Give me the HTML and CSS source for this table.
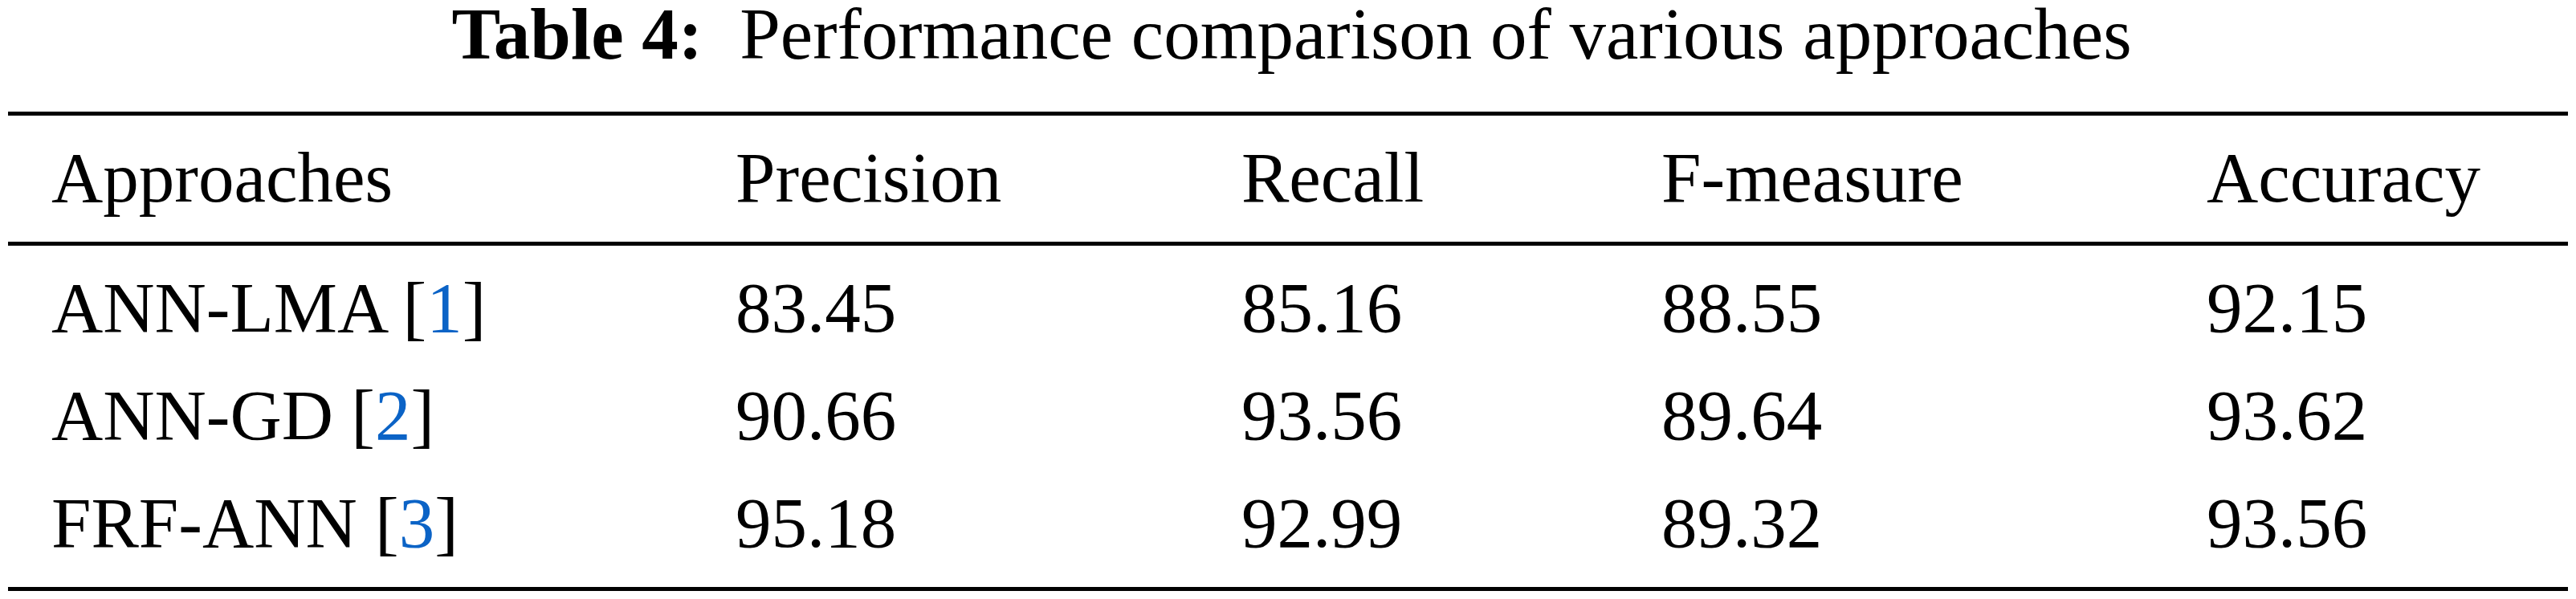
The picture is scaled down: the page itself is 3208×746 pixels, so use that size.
FILE: index.html
```html
<!DOCTYPE html>
<html lang="en">
<head>
    <meta charset="UTF-8">
    <meta name="viewport" content="width=device-width, initial-scale=1.0">
    <title>Table 4: Performance comparison of various approaches</title>
    <link rel="stylesheet" href="styles.css">
</head>
<body>
    <div class="caption"><b class="label">Table 4:</b>Performance comparison of various approaches</div>
    <table class="results">
        <colgroup>
            <col class="c-name">
            <col class="c-prec">
            <col class="c-rec">
            <col class="c-fm">
            <col class="c-acc">
        </colgroup>
        <thead>
            <tr>
                <th>Approaches</th>
                <th>Precision</th>
                <th>Recall</th>
                <th>F-measure</th>
                <th>Accuracy</th>
            </tr>
        </thead>
        <tbody>
            <tr>
                <td>ANN-LMA [<a class="cite" href="#ref1">1</a>]</td>
                <td>83.45</td>
                <td>85.16</td>
                <td>88.55</td>
                <td>92.15</td>
            </tr>
            <tr>
                <td>ANN-GD [<a class="cite" href="#ref2">2</a>]</td>
                <td>90.66</td>
                <td>93.56</td>
                <td>89.64</td>
                <td>93.62</td>
            </tr>
            <tr>
                <td>FRF-ANN [<a class="cite" href="#ref3">3</a>]</td>
                <td>95.18</td>
                <td>92.99</td>
                <td>89.32</td>
                <td>93.56</td>
            </tr>
        </tbody>
    </table>
</body>
</html>
```

FILE: styles.css
```css
body {
    margin: 0;
    background: #fff;
    color: #000;
    font-family: "Liberation Serif", "Times New Roman", serif;
}

.caption {
    font-size: 91px;
    line-height: 85px;
    text-align: center;
    padding-left: 9px;
    margin: 0 0 54px 0;
    white-space: nowrap;
}
.caption .label { margin-right: 46px; }

.results {
    margin-left: 10px;
    width: 3188px;
    table-layout: fixed;
    border-collapse: separate;
    border-spacing: 0;
    font-size: 89px;
    line-height: 99px;
}
.c-name { width: 906px; }
.c-prec { width: 630px; }
.c-rec { width: 523px; }
.c-fm { width: 679px; }
.c-acc { width: 450px; }

.results th,
.results td {
    text-align: left;
    font-weight: normal;
    padding: 28px 0 7px 0;
    white-space: nowrap;
}
.results th:first-child,
.results td:first-child { padding-left: 54px; }

.results th {
    padding-bottom: 30px;
    border-top: 5px solid #000;
    border-bottom: 5px solid #000;
}
.results tbody tr:last-child td {
    padding-bottom: 30px;
    border-bottom: 5px solid #000;
}

.cite { color: #0b63c6; text-decoration: none; }
```
